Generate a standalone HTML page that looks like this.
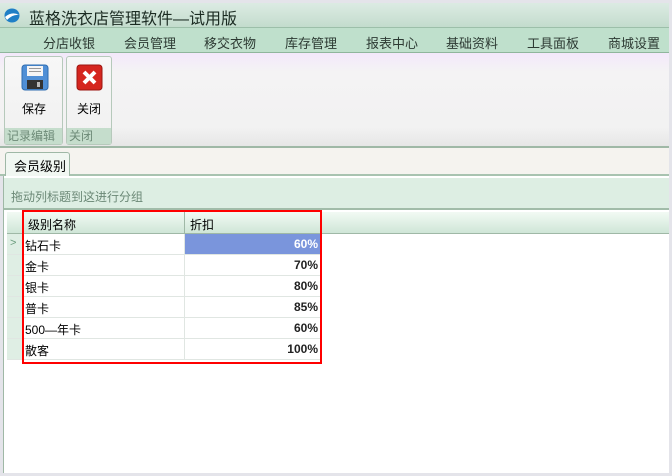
<!DOCTYPE html>
<html><head><meta charset="utf-8"><style>
*{margin:0;padding:0;box-sizing:border-box}
body{width:672px;height:476px;background:#e4e4ea;font-family:"Liberation Sans","Noto Sans CJK SC",sans-serif;font-size:12px;color:#000;position:relative;overflow:hidden}
.abs{position:absolute}
#title{left:0;top:3px;width:669px;height:25px;background:linear-gradient(#dcebe3,#c3dccd);border-bottom:1px solid #9cbfa9}
#title span{position:absolute;left:29px;top:2px;font-size:16px;color:#1b2b22}
#menu{left:0;top:28px;width:669px;height:25px;background:#bfe0cc;border-bottom:1px solid #8fb69c}
#menu span{position:absolute;top:5px;font-size:13px;color:#2d3a33}
#tool{left:0;top:53px;width:669px;height:95px;background:linear-gradient(#f3e8fb,#f4f3f4 20%,#f2f2f2 80%,#e6e6e6);border-bottom:2px solid #9fb8a6}
.grp{position:absolute;top:3px;height:89px;border:1px solid #b6c9bb;border-radius:3px;background:linear-gradient(#f7f7f7,#f0f0f0)}
.grp .lbl{position:absolute;left:0;right:0;bottom:0;height:16px;background:#c5ddcc;color:#6d8a77;font-size:12px;padding-left:2px;line-height:16px}
#tabs{left:0;top:148px;width:669px;height:28px;background:#f5f3ef;border-bottom:2px solid #a8c3b0}
#tab{left:5px;top:152px;width:65px;height:24px;background:#f1f7f2;border:1px solid #9fb8a6;border-bottom:none;border-radius:3px 3px 0 0;font-size:13px;padding:3px 0 0 8px}
#main{left:3px;top:176px;width:666px;height:297px;background:#fff;border-left:1px solid #9fb8a6}
#grpbar{left:4px;top:178px;width:665px;height:32px;background:#ddeee3;border-bottom:2px solid #a1bca9;color:#6b8876;font-size:12px;padding:10px 0 0 7px}
#hdr{left:7px;top:212px;width:662px;height:22px;background:linear-gradient(#f2faf4,#cfe6d7);border-bottom:1px solid #9fb8a6}
.row{position:absolute;left:7px;width:314px;height:21px;border-bottom:1px solid #e0e6e2}
.ind{position:absolute;left:7px;width:16px;height:21px;background:#dfeee4;border-bottom:1px solid #b9cfc0;border-right:1px solid #b9cfc0}
.c1{position:absolute;left:18px;top:3px;font-size:12px}
.c2{position:absolute;left:177px;width:136px;top:0;height:20px;text-align:right;padding:3px 2px 0 0;border-left:1px solid #e0e6e2;font-weight:bold;color:#222}
#red{left:22px;top:210px;width:300px;height:154px;border:2px solid #f00}
</style></head><body>
<div id="title" class="abs">
<svg class="abs" style="left:4px;top:5px" width="16" height="15" viewBox="0 0 16 15"><ellipse cx="8" cy="7.5" rx="7.5" ry="7" fill="#1f7fc6"/><path d="M1 9 Q8 3 15 7 Q9 6 3 12Z" fill="#fff"/></svg>
<span>蓝格洗衣店管理软件—试用版</span></div>
<div id="menu" class="abs">
<span style="left:43px">分店收银</span><span style="left:124px">会员管理</span><span style="left:204px">移交衣物</span><span style="left:285px">库存管理</span><span style="left:366px">报表中心</span><span style="left:446px">基础资料</span><span style="left:527px">工具面板</span><span style="left:608px">商城设置</span></div>
<div id="tool" class="abs">
<div class="grp" style="left:4px;width:59px">
<svg class="abs" style="left:16px;top:7px" width="28" height="27" viewBox="0 0 28 27"><rect x="1" y="1" width="26" height="25" rx="3" fill="#4f8fd6" stroke="#2f6db0"/><rect x="6" y="2" width="16" height="10" fill="#f5f5f5"/><rect x="8" y="4" width="12" height="1" fill="#999"/><rect x="8" y="7" width="12" height="1" fill="#999"/><rect x="6" y="16" width="16" height="9" fill="#333"/><rect x="16" y="18" width="3" height="5" fill="#bbb"/></svg>
<div class="abs" style="left:17px;top:43px;font-size:12px">保存</div>
<div class="lbl">记录编辑</div></div>
<div class="grp" style="left:66px;width:46px">
<svg class="abs" style="left:9px;top:7px" width="27" height="27" viewBox="0 0 27 27"><rect x="1" y="1" width="25" height="25" rx="3" fill="#d5261f" stroke="#9c1510"/><path d="M8 8L19 19M19 8L8 19" stroke="#fff" stroke-width="4"/></svg>
<div class="abs" style="left:10px;top:43px;font-size:12px">关闭</div>
<div class="lbl">关闭 <span style="font-size:8px;margin-left:8px">◲</span></div></div>
</div>
<div id="tabs" class="abs"></div>
<div id="tab" class="abs">会员级别</div>
<div id="main" class="abs"></div>
<div id="grpbar" class="abs">拖动列标题到这进行分组</div>
<div id="hdr" class="abs">
<div class="abs" style="left:0;top:0;width:16px;height:21px;border-right:1px solid #9fb8a6"></div>
<div class="abs" style="left:21px;top:4px">级别名称</div>
<div class="abs" style="left:177px;top:0;height:21px;border-left:1px solid #9fb8a6;padding:4px 0 0 5px">折扣</div></div>

<div class="ind" style="top:234px;color:#6a9c7c;font-size:11px;padding:3px 0 0 3px">&gt;</div>
<div class="row" style="top:234px"><div class="c1">钻石卡</div><div class="c2" style="background:#7a95dc;color:#fff">60%</div></div>
<div class="ind" style="top:255px"></div><div class="row" style="top:255px"><div class="c1">金卡</div><div class="c2">70%</div></div>
<div class="ind" style="top:276px"></div><div class="row" style="top:276px"><div class="c1">银卡</div><div class="c2">80%</div></div>
<div class="ind" style="top:297px"></div><div class="row" style="top:297px"><div class="c1">普卡</div><div class="c2">85%</div></div>
<div class="ind" style="top:318px"></div><div class="row" style="top:318px"><div class="c1">500—年卡</div><div class="c2">60%</div></div>
<div class="ind" style="top:339px"></div><div class="row" style="top:339px"><div class="c1">散客</div><div class="c2">100%</div></div>
<div id="red" class="abs"></div>
</body></html>
